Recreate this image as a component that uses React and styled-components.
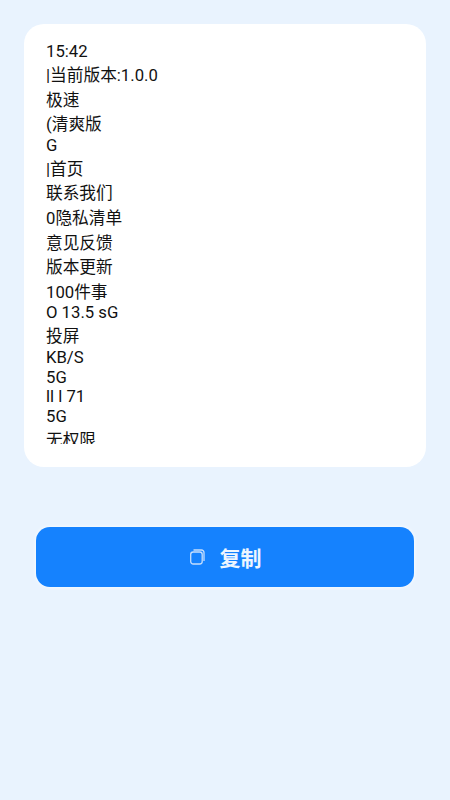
import React from "react";
import styled, { createGlobalStyle } from "styled-components";

const Global = createGlobalStyle`
  html, body { margin: 0; padding: 0; background: #e9f3fe; }
  body { font-family: Roboto, "Noto Sans CJK SC", sans-serif; }
`;

const Page = styled.div`
  width: 450px;
  height: 800px;
  box-sizing: border-box;
  padding: 24px 24px 0;
  display: flex;
  flex-direction: column;
  align-items: center;
  background: #e9f3fe;
  overflow: hidden;
`;

const Card = styled.div`
  width: 402px;
  height: 443px;
  box-sizing: border-box;
  padding: 16px 22px 23px 22px;
  background: #ffffff;
  border-radius: 20px;
  flex: none;
`;

const TextArea = styled.div`
  height: 404px;
  overflow: hidden;
  color: #111111;
  font-size: 16.7px;
`;

const Line = styled.div`
  height: ${(p) => p.$step}px;
  line-height: 24px;
  white-space: pre;
`;

const CopyButton = styled.button`
  margin-top: 60px;
  width: 378px;
  height: 60px;
  flex: none;
  display: flex;
  align-items: center;
  justify-content: center;
  gap: 15px;
  border: none;
  padding: 0 0 0 1px;
  border-radius: 14px;
  background: #1582fe;
  box-shadow: 0 0 3px 1px #f5faff;
  color: #eef6ff;
  font-family: "Noto Sans CJK SC", sans-serif;
  font-size: 21px;
  font-weight: 700;
`;

const lines = [
  ["15:42", 24], ["|当前版本:1.0.0", 24.5], ["极速", 24.5], ["(清爽版", 21], ["G", 24], ["|首页", 24],
  ["联系我们", 25], ["0隐私清单", 24.5], ["意见反馈", 24.5], ["版本更新", 24.5], ["100件事", 20.5],
  ["O 13.5 sG", 23.5], ["投屏", 21.5], ["KB/S", 19.5], ["5G", 19.5], ["ll l 71", 20], ["5G", 24], ["无权限", 24],
];

const CopyIcon = () => (
  <svg width="15" height="16" viewBox="0 0 15 16" fill="none" stroke="#c6defc" strokeWidth="1.3">
    <rect x="0.7" y="3" width="11.5" height="12" rx="2.5" />
    <path d="M3.5 1h8a2.5 2.5 0 0 1 2.5 2.5v8.5" />
  </svg>
);

export default function App() {
  return (
    <>
      <Global />
      <Page>
        <Card>
          <TextArea>
            {lines.map(([text, step], i) => (
              <Line key={i} $step={step}>{text}</Line>
            ))}
          </TextArea>
        </Card>
        <CopyButton>
          <CopyIcon />
          复制
        </CopyButton>
      </Page>
    </>
  );
}
